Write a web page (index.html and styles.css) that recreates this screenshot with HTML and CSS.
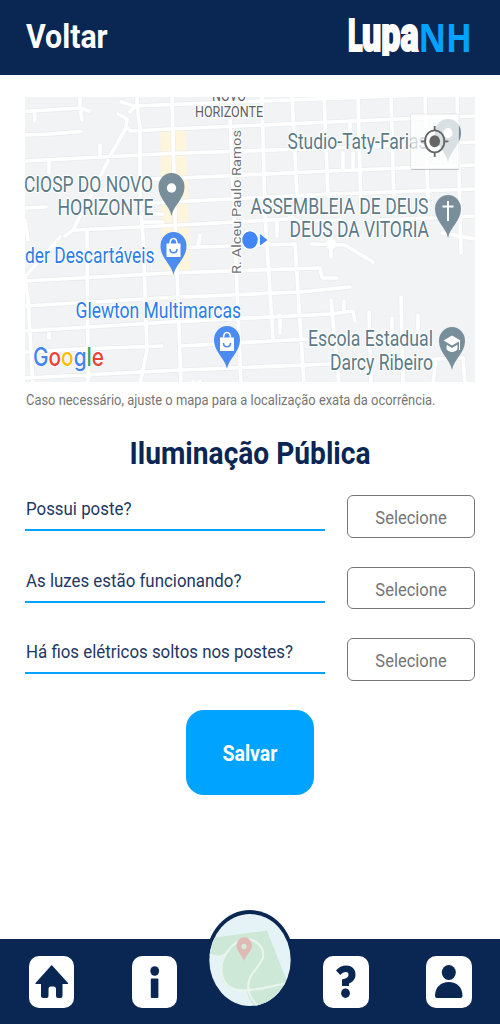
FILE: index.html
```html
<!DOCTYPE html>
<html lang="pt-BR">
<head>
<meta charset="utf-8">
<title>LupaNH</title>
<link rel="stylesheet" href="styles.css">
</head>
<body>
<div class="app">
<header class="topbar">
  <a class="back"><span class="narrow">Voltar</span></a>
  <svg class="logo" viewBox="347 14 125 42" role="img" aria-label="LupaNH">
    <text class="logo-l" x="348" y="51" textLength="14.500" lengthAdjust="spacingAndGlyphs">L</text>
    <text class="logo-upa" x="362" y="51" textLength="56.500" lengthAdjust="spacingAndGlyphs">upa</text>
    <text class="logo-nh" x="418.500" y="52.300" textLength="53.500" lengthAdjust="spacingAndGlyphs">NH</text>
  </svg>
</header>
<main class="content">
  <svg class="map" viewBox="25 97 450 285">
    <defs>
      <g id="roads">
        <path d="M25 111.500 80 108 89 111M80 96V108L82 120M34.700 112V121M25 135 50 134 81 131.500M121 102 134 106 170 104.500 330 98.500 475 93M137 96V105L140 128V205L143 235 147 350 140 384M134 107 130 112M118 114 127 119 126 127 131 131 170 129 330 122 400 119 475 116M126 128 110 156M108 161 73 230 65 236M25 161 170 153.500 330 148 475 142M100 145V156M49 161V173M25 208 46 207M25 220 28 240M75 230 170 225.500 289 219"/>
        <path d="M140 179 170 178.500 330 171 475 165M144 203.500 170 202 330 194 475 189M144 214H163M144 222H163M172 96 175 215 181 384M229 96 231 140 237 290 241 384M262 96 265 215 273 338M292 96 298 215M324 96 328 196M358 96 361 212M391 96 394 205M425 96 428 205M457 96 461 253M350 121V131M343 153V170M353 153V170"/>
        <path d="M60 237 55 243 25 277 28 300 33 384M87 230 88 384M25 281 170 273 320 268 322 278H337M25 306 170 297.500 300 292 350 287M25 331 170 322 330 314 353 311 355 321M49 329V338M25 352 78 349 162 346M180 346 310 339M25 378 170 370.500 330 364 360 363M170 248 295 244 304 384M200 235 198 247M280 315V333M311 244 345 245 373 262M331 236V257M320 290 350 287M331 300 339 384M344 301V312M369 312 371 384M392 318V345M401 297 403 384M418 315V345M442 233 475 239M433 384 436 359 463 358 465 384M403 365 436 359M277 222V236M193 381V384M200 381V384M290 217 300 222 340 220M380 220 475 216"/>
        <ellipse cx="331" cy="244" rx="3" ry="4"/>
      </g>
      <path id="pin" d="M0 21C-2 10-13 4-13-8A13 14 0 0 1 13-8C13 4 2 10 0 21Z"/>
      <g id="bag"><path d="M-7-10.500H7V3H-7Z" fill="#fff"/><path d="M-3.500-10C-3.500-17.500 3.500-17.500 3.500-10" fill="none" stroke="#fff" stroke-width="1.500"/><path d="M-3.500-5C-3.500 0 3.500 0 3.500-5" fill="none" stroke="#4c8bf0" stroke-width="1.500"/></g>
    </defs>
    <rect class="land" x="25" y="96" width="451" height="288"/>
    <path class="district" d="M160.500 131H171.500L174 271H166L161 225ZM175 131H186L190 271H179Z"/>
    <use href="#roads" class="road-edge"/>
    <use href="#roads" class="road"/>

    <text class="area" x="212" y="100.500" textLength="34" lengthAdjust="spacingAndGlyphs">NOVO</text>
    <text class="area" x="195" y="117" textLength="68" lengthAdjust="spacingAndGlyphs">HORIZONTE</text>
    <text class="street" transform="translate(241 274) rotate(-90)" textLength="144" lengthAdjust="spacingAndGlyphs">R. Alceu Paulo Ramos</text>
    <g class="place">
      <text x="287.500" y="149.200" textLength="140" lengthAdjust="spacingAndGlyphs">Studio-Taty-Farias</text>
      <text x="24" y="191.500" textLength="129" lengthAdjust="spacingAndGlyphs">CIOSP DO NOVO</text>
      <text x="57.500" y="214.700" textLength="96" lengthAdjust="spacingAndGlyphs">HORIZONTE</text>
      <text x="250.500" y="214" textLength="178" lengthAdjust="spacingAndGlyphs">ASSEMBLEIA DE DEUS</text>
      <text x="289.500" y="237" textLength="139.500" lengthAdjust="spacingAndGlyphs">DEUS DA VITORIA</text>
      <text x="308" y="346.200" textLength="125" lengthAdjust="spacingAndGlyphs">Escola Estadual</text>
      <text x="330" y="369.500" textLength="103" lengthAdjust="spacingAndGlyphs">Darcy Ribeiro</text>
    </g>
    <g class="place shop">
      <text x="25" y="263" textLength="129.500" lengthAdjust="spacingAndGlyphs">der Descartáveis</text>
      <text x="75.500" y="318" textLength="165.500" lengthAdjust="spacingAndGlyphs">Glewton Multimarcas</text>
    </g>

    <g class="pin">
      <use href="#pin" x="171.500" y="195"/><circle cx="171.500" cy="188" r="4.700" fill="#fff"/>
      <use href="#pin" x="448" y="141"/><ellipse cx="448" cy="133" rx="4.500" ry="5" fill="#fff"/>
      <use href="#pin" x="448" y="217"/><path d="M448 201V221M442.500 206.500H453.500" stroke="#fff" stroke-width="2"/>
      <use href="#pin" x="452" y="349"/><path d="M443.500 340.500 452 335.500 460.500 340.500 452 345.500Z" fill="#fff"/><path d="M447 345.500 452 348.500 457 345.500V349.500Q452 353.500 447 349.500ZM459.500 341V350" fill="#fff" stroke="#fff"/>
    </g>
    <g class="pin-shop">
      <use href="#pin" x="173.500" y="254"/><use href="#bag" x="173.500" y="254"/>
      <use href="#pin" x="227" y="348"/><use href="#bag" x="227" y="348"/>
    </g>
    <ellipse cx="250" cy="240" rx="8.500" ry="9.500" fill="#4285f4" stroke="#fff" stroke-width="1.500"/>
    <path d="M260 234 267.500 240 260 245.500Z" fill="#4285f4"/>

    <rect class="locate" x="410.500" y="114" width="48.500" height="55" rx="1"/>
    <path d="M411 169.500H459" stroke="#000" stroke-opacity=".16"/>
    <g fill="none" stroke="#666" stroke-width="1.800"><ellipse cx="434.700" cy="141.300" rx="9.700" ry="11"/><path d="M434.700 126V131M434.700 152V157M421 141.300H426M443.500 141.300H448.500"/></g>
    <ellipse cx="434.700" cy="141.300" rx="5.300" ry="6" fill="#666"/>

    <text class="google" x="33" y="366" textLength="71" lengthAdjust="spacingAndGlyphs"><tspan fill="#4285f4">G</tspan><tspan fill="#ea4335">o</tspan><tspan fill="#fbbc04">o</tspan><tspan fill="#4285f4">g</tspan><tspan fill="#34a853">l</tspan><tspan fill="#ea4335">e</tspan></text>
  </svg>
  <p class="hint"><span class="narrow">Caso necessário, ajuste o mapa para a localização exata da ocorrência.</span></p>
  <h1 class="title"><span class="narrow">Iluminação Pública</span></h1>
  <div class="questions">
    <div class="question"><div class="label"><span class="narrow">Possui poste?</span></div><button class="select"><span class="narrow">Selecione</span></button></div>
    <div class="question"><div class="label"><span class="narrow">As luzes estão funcionando?</span></div><button class="select"><span class="narrow">Selecione</span></button></div>
    <div class="question"><div class="label"><span class="narrow">Há fios elétricos soltos nos postes?</span></div><button class="select"><span class="narrow">Selecione</span></button></div>
  </div>
  <button class="save"><span class="narrow">Salvar</span></button>
</main>
<nav class="bottombar">
  <div class="pair">
    <a class="tab"><svg viewBox="0 0 45.500 51.500"><path d="M22.700 9 39 27V28H33.500V40Q33.500 42 31.500 42H29Q27 42 27 40V33Q27 30.500 25 30.500H21.500Q19.500 30.500 19.500 33V40Q19.500 42 17.500 42H14Q12 42 12 40V28H6.500V27Z"/></svg></a>
    <a class="tab"><svg viewBox="0 0 45.500 51.500"><ellipse cx="22.700" cy="15" rx="4.400" ry="4.800"/><rect x="18.800" y="22.500" width="7.600" height="19.500" rx="1"/></svg></a>
  </div>
  <a class="map-tab">
    <svg viewBox="205 908 90 104">
      <defs><clipPath id="disc"><ellipse cx="250" cy="960" rx="40.700" ry="46"/></clipPath></defs>
      <ellipse cx="250" cy="959.500" rx="44" ry="49.500" fill="#0a2754"/>
      <g clip-path="url(#disc)">
        <rect x="205" y="908" width="90" height="104" fill="#e5f3f6"/>
        <path d="M208 938.500 267 930.500 288 984 260 1010Q248 1002 247 991 222 991 221 974 220 965 226 956 218 958 208 954Z" fill="#cee8d7"/>
        <g fill="none" stroke="#e9f5ee" stroke-width="2"><path d="M208 954Q222 960 228 951 237 937 252 940 265 945 263 958 259 966 252 974 242 991 258 1006"/><path d="M228 951C218 964 218 986 238 990 256 992 272 985 289 983"/></g>
        <path d="M244 961C242 955 236.500 951 236.500 945.500A7.600 8 0 0 1 252 945.500C252 951 246 955 244 961Z" fill="#dfbab5"/><ellipse cx="244" cy="946.500" rx="2.500" ry="2.800" fill="#d6ebdf"/>
      </g>
    </svg>
  </a>
  <div class="pair">
    <a class="tab"><svg viewBox="0 0 45.500 51.500"><path d="M13 14.500C18 7.500 32.500 7 32.500 18.500 32.500 24 29 26 26 27.500V30H19V23.500C23 22.500 25.500 21.500 25.500 18.500 25.500 15 20 15.500 17.300 19Z"/><ellipse cx="22.500" cy="37.200" rx="4.400" ry="4.800"/></svg></a>
    <a class="tab"><svg viewBox="0 0 45.500 51.500"><ellipse cx="22.800" cy="16.500" rx="7" ry="7.500"/><path d="M9 40C9 31 15 26 22.800 26S36.500 31 36.500 40Q36.500 42 34.500 42H11Q9 42 9 40Z"/></svg></a>
  </div>
</nav>
</div>
</body>
</html>
```

FILE: styles.css
```css
* { box-sizing: border-box; }
body { margin: 0; font-family: Roboto, "Liberation Sans", sans-serif; background: #fff; }
.app { width: 500px; height: 1024px; display: flex; flex-direction: column; overflow: hidden; }
.narrow { display: inline-block; transform: scaleX(.87); transform-origin: left center; white-space: nowrap; }

.topbar { height: 75px; flex: none; display: flex; justify-content: space-between; background: #0a2754; padding: 14px 28px 0 25.500px; }
.back { color: #fff; font-size: 34px; font-weight: 700; line-height: 44px; }
.back .narrow { transform: scaleX(.89); }
.logo { width: 125px; height: 42px; overflow: hidden; }
.logo-l, .logo-upa { font: 900 45px Roboto, sans-serif; fill: #fff; stroke: #fff; stroke-width: 2px; }
.logo-upa { font-size: 49px; }
.logo-nh { font: 700 39px "Open Sans", sans-serif; fill: #00a3ff; }

.content { flex: 1; display: flex; flex-direction: column; padding: 22px 25px 0; }
.map { width: 450px; height: 285px; flex: none; display: block; }
.land { fill: #f1f3f4; }
.district { fill: #fdf5dc; }
.road, .road-edge { fill: none; stroke-linejoin: round; stroke-linecap: round; }
.road-edge { stroke: #e9ebed; stroke-width: 4.800px; }
.road { stroke: #fff; stroke-width: 3.700px; }
.map text { paint-order: stroke; stroke: #fff; stroke-width: 2.500px; stroke-linejoin: round; }
.street { font-size: 13.500px; fill: #707478; }
.area { font-size: 15.500px; fill: #5d6064; }
.place { font-size: 21.500px; fill: #5c7b88; }
.shop { fill: #2b7de9; }
.pin { fill: #788f9b; }
.pin-shop { fill: #4c8bf0; }
.locate { fill: #fff; fill-opacity: .72; stroke: #000; stroke-opacity: .07; }
.map .google { font: 500 25.500px Inter, sans-serif; stroke-width: 2px; }

.hint { margin: 9px 0 0 .5px; height: 18px; font-size: 14px; line-height: 18px; color: #757575; }
.hint .narrow { transform: scaleX(.922); }
.title { margin: 23px 0 0; height: 42px; text-align: center; font-size: 32px; line-height: 42px; color: #0a2754; }
.title .narrow { transform: scaleX(.879); }
.title .narrow, .select .narrow, .save .narrow { transform-origin: center; }
.questions { display: flex; flex-direction: column; gap: 28.800px; margin-top: 21.050px; }
.question { display: flex; justify-content: space-between; height: 42.700px; }
.label { width: 300px; padding-left: .5px; height: 36px; border-bottom: 2px solid #00a3ff; font-size: 18px; line-height: 28px; color: #1d3763; }
.label .narrow { transform: scaleX(.937); }
.select { display: flex; align-items: center; justify-content: center; width: 128px; padding: 3px 0 0; border: 1.500px solid #777; border-radius: 6px; background: #fff; color: #757575; font: 400 19px Roboto, sans-serif; }
.save { align-self: center; width: 127.500px; height: 85.500px; margin-top: 29px; padding: 3px 0 0; border: 0; border-radius: 18px; background: #00a3ff; color: #fff; font: 700 22px Roboto, sans-serif; }
.save .narrow { transform: scaleX(.885); }

.bottombar { flex: none; height: 85.500px; background: #0a2754; padding: 17.500px 28.500px 0; display: flex; justify-content: space-between; }
.pair { display: flex; gap: 57.500px; }
.tab { width: 45.500px; height: 51.500px; border-radius: 10px; background: #fff; }
.tab svg { display: block; width: 45.500px; height: 51.500px; fill: #0a2754; }
.map-tab { width: 90px; height: 104px; margin-top: -48px; }
.map-tab svg { display: block; width: 90px; height: 104px; }
```
